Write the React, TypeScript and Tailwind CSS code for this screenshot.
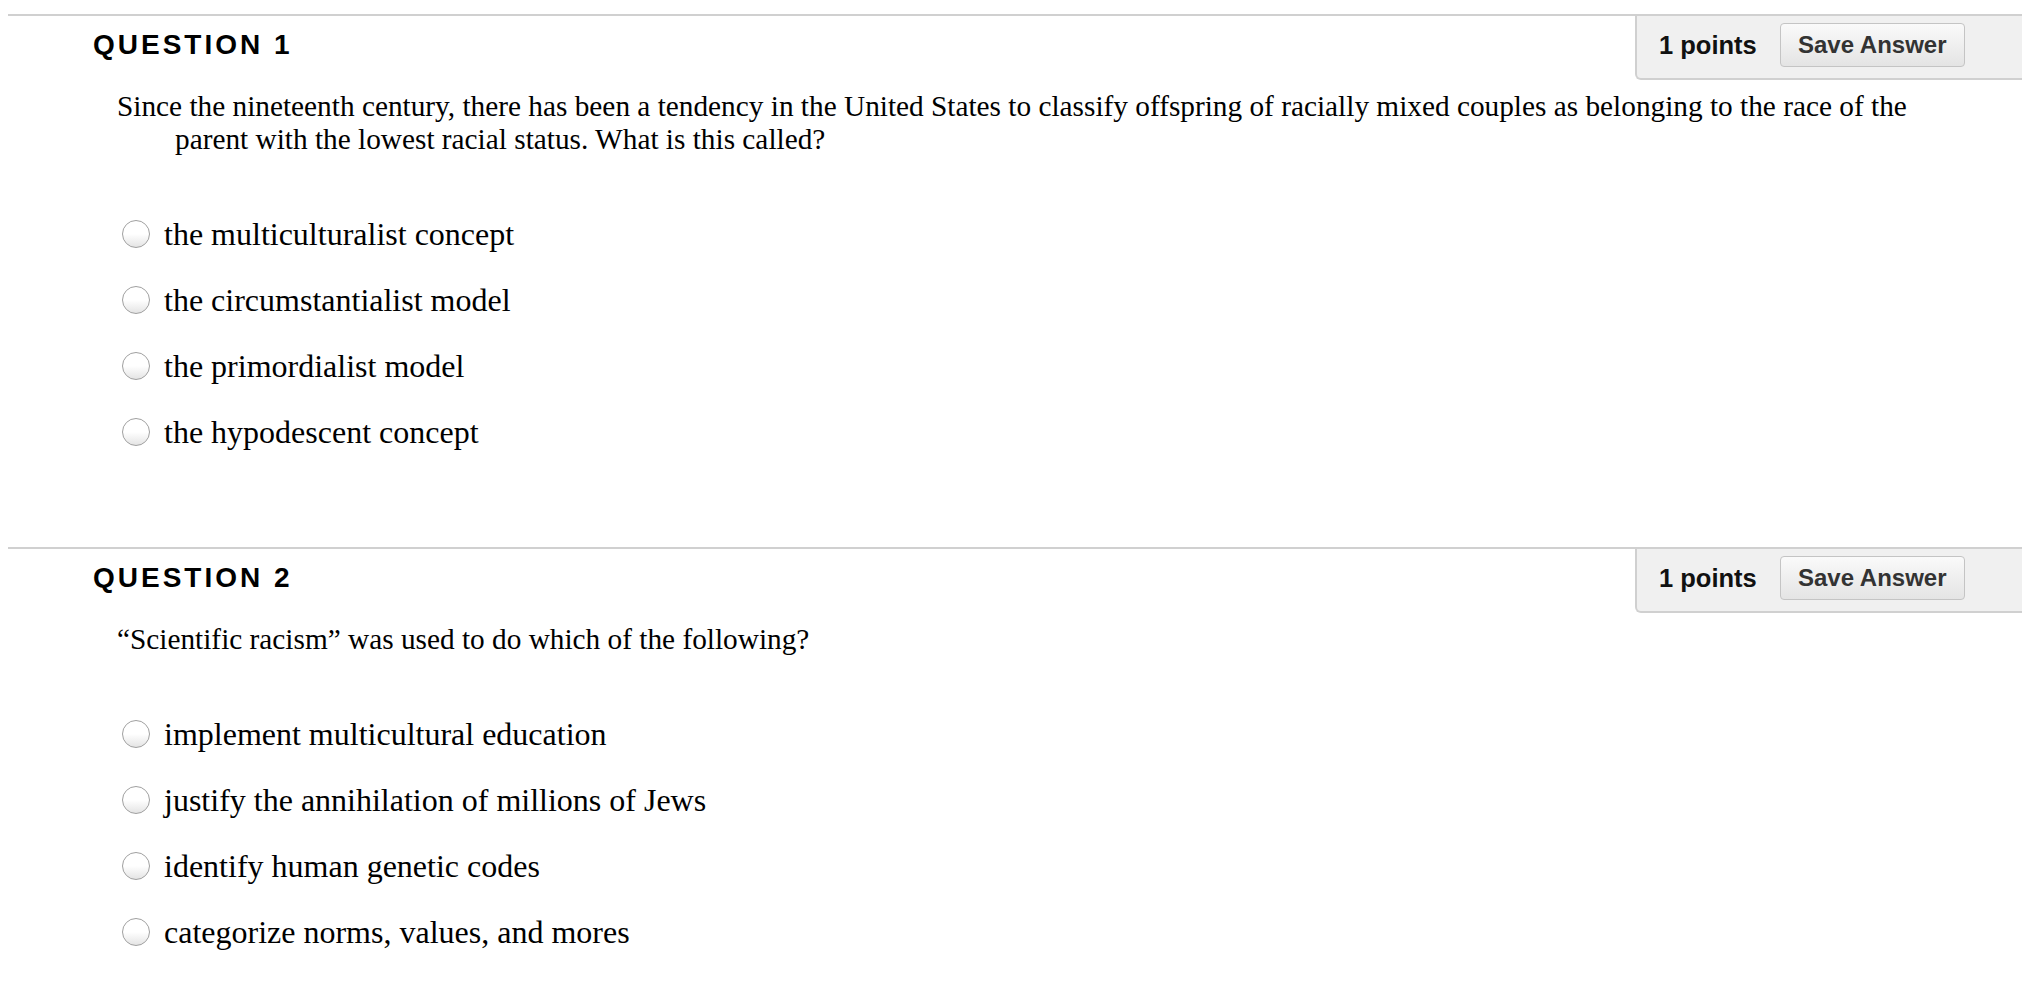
const questions = [
  {
    num: 1,
    points: 1,
    text: 'Since the nineteenth century, there has been a tendency in the United States to classify offspring of racially mixed couples as belonging to the race of the parent with the lowest racial status. What is this called?',
    options: [
      'the multiculturalist concept',
      'the circumstantialist model',
      'the primordialist model',
      'the hypodescent concept',
    ],
  },
  {
    num: 2,
    points: 1,
    text: '\u201cScientific racism\u201d was used to do which of the following?',
    options: [
      'implement multicultural education',
      'justify the annihilation of millions of Jews',
      'identify human genetic codes',
      'categorize norms, values, and mores',
    ],
  },
];

const Radio = () => (
  <span className="block h-[28px] w-[28px] shrink-0 rounded-full border border-[#a0a0a0] bg-linear-to-b from-white via-white to-[#e4e4e4]" />
);

const Question = ({ q }: { q: (typeof questions)[number] }) => (
  <div className="ml-[8px] mr-[20px] border-t-2 border-[#d0d0d0] pb-[82px]">
    <div className="flex items-start justify-between">
      <h3
        className="ml-[85px] mt-[13px] text-[28px] font-bold leading-[32px] tracking-[3px] text-black"
        style={{ fontFamily: '"Liberation Sans", Arial, sans-serif' }}
      >
        QUESTION {q.num}
      </h3>
      <div
        className="flex w-[387px] items-center rounded-bl-[6px] border-b-2 border-l-2 border-[#d0d0d0] bg-[#f0f0f0] pb-[11px] pl-[22px] pt-[7px]"
        style={{ fontFamily: '"Liberation Sans", Arial, sans-serif' }}
      >
        <span className="text-[25.5px] font-bold text-[#111]">{q.points} points</span>
        <button className="ml-[23px] h-[44px] w-[185px] rounded-[4px] border border-[#c4c4c4] bg-linear-to-b from-[#fafafa] to-[#e4e4e4] text-[24px] font-bold text-[#333]">
          Save Answer
        </button>
      </div>
    </div>

    <div style={{ fontFamily: '"Liberation Serif", "Times New Roman", serif' }}>
      <p className="mt-[10px] pl-[167px] pr-[70px] text-[29.3px] leading-[33px] text-black [text-indent:-58px]">
        {q.text}
      </p>

      <div className="ml-[114px] mt-[45px] flex flex-col">
        {q.options.map((o) => (
          <label key={o} className="flex h-[66px] items-center gap-[14px] text-[32px] text-black">
            <Radio />
            <span>{o}</span>
          </label>
        ))}
      </div>
    </div>
  </div>
);

export default function App() {
  return (
    <div className="h-[1004px] w-full overflow-hidden bg-white pt-[14px]">
      {questions.map((q) => (
        <Question key={q.num} q={q} />
      ))}
    </div>
  );
}
